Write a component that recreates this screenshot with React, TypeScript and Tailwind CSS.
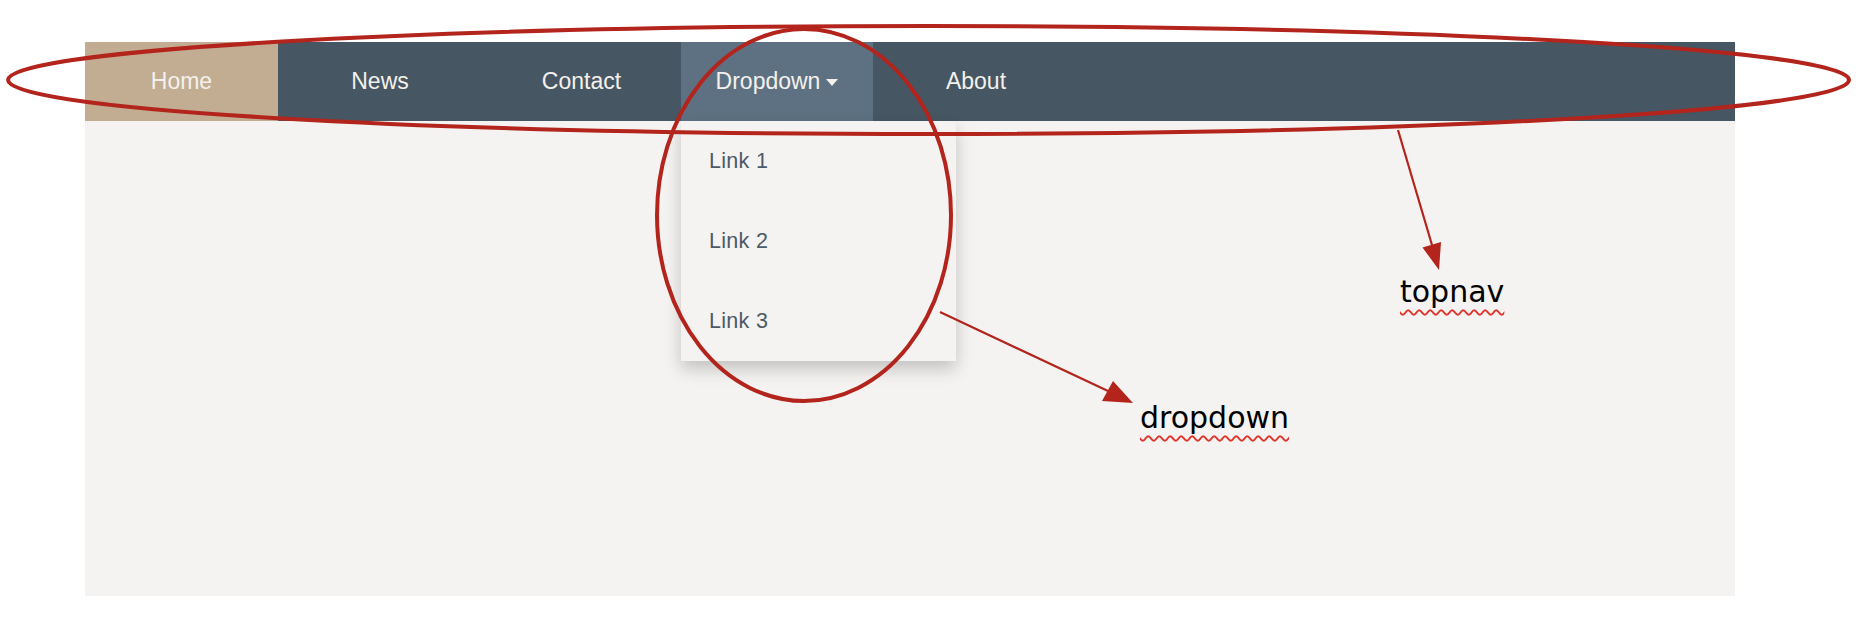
import { ReactNode } from 'react';

const navFont = { fontFamily: '"Liberation Sans", Arial, sans-serif' };
const noteFont = { fontFamily: '"DejaVu Sans", "Liberation Sans", sans-serif' };

function NavItem({ width, active, hover, children }: { width: string; active?: boolean; hover?: boolean; children: ReactNode }) {
  return (
    <div
      className={`${width} h-full flex items-center justify-center text-[23px] text-[#f4f1ec] ${
        active ? 'bg-[#c2ac92]' : hover ? 'bg-[#5d7182]' : ''
      }`}
    >
      {children}
    </div>
  );
}

export default function App() {
  const links = ['Link 1', 'Link 2', 'Link 3'];

  return (
    <div className="relative w-[1861px] h-[624px] bg-white overflow-hidden" style={navFont}>
      <div className="pt-[42px] pl-[85px]">
        <div className="w-[1650px] h-[554px] bg-[#f4f3f1]">
          {/* Top navigation */}
          <nav className="flex h-[79px] bg-[#475663]">
            <NavItem width="w-[193px]" active>Home</NavItem>
            <NavItem width="w-[204px]">News</NavItem>
            <NavItem width="w-[199px]">Contact</NavItem>
            <div className="relative w-[192px] h-full">
              <NavItem width="w-[192px]" hover>
                <span>Dropdown</span>
                <svg width="12" height="7" viewBox="0 0 12 7" className="ml-[6px] mt-[1px]">
                  <path d="M0 0h12L6 7z" fill="#f4f1ec" />
                </svg>
              </NavItem>
              <div className="absolute left-0 top-full z-10 w-[275px] bg-[#f4f3f1] shadow-[0_8px_16px_0_rgba(0,0,0,0.2)]">
                {links.map((l) => (
                  <div key={l} className="h-[80px] flex items-center pl-[28px] text-[21.5px] tracking-[0.3px] text-[#4b5a68]">
                    {l}
                  </div>
                ))}
              </div>
            </div>
            <NavItem width="w-[206px]">About</NavItem>
          </nav>
        </div>
      </div>

      {/* Annotation marks drawn over the page */}
      <svg className="absolute inset-0 z-20 pointer-events-none" width="1861" height="624" viewBox="0 0 1861 624">
        <ellipse cx="928.5" cy="80" rx="920.5" ry="54" fill="none" stroke="#b3241c" strokeWidth="4" />
        <ellipse cx="804" cy="215" rx="147" ry="186" fill="none" stroke="#b3241c" strokeWidth="4" />
        <line x1="1398" y1="130" x2="1432" y2="245" stroke="#b3241c" strokeWidth="2.2" />
        <polygon points="1439,270 1422.5,247.5 1441,242" fill="#b3241c" />
        <line x1="940" y1="312" x2="1108" y2="391" stroke="#b3241c" strokeWidth="2.2" />
        <polygon points="1133,403 1102,401 1113,381" fill="#b3241c" />
      </svg>

      <div
        className="absolute z-30 left-[1400px] top-[276px] text-[30px] leading-[31px] text-black underline decoration-wavy decoration-[#e0352b] decoration-2 underline-offset-[7px]"
        style={noteFont}
      >
        topnav
      </div>
      <div
        className="absolute z-30 left-[1140px] top-[402px] text-[30px] leading-[31px] text-black underline decoration-wavy decoration-[#e0352b] decoration-2 underline-offset-[7px]"
        style={noteFont}
      >
        dropdown
      </div>
    </div>
  );
}
